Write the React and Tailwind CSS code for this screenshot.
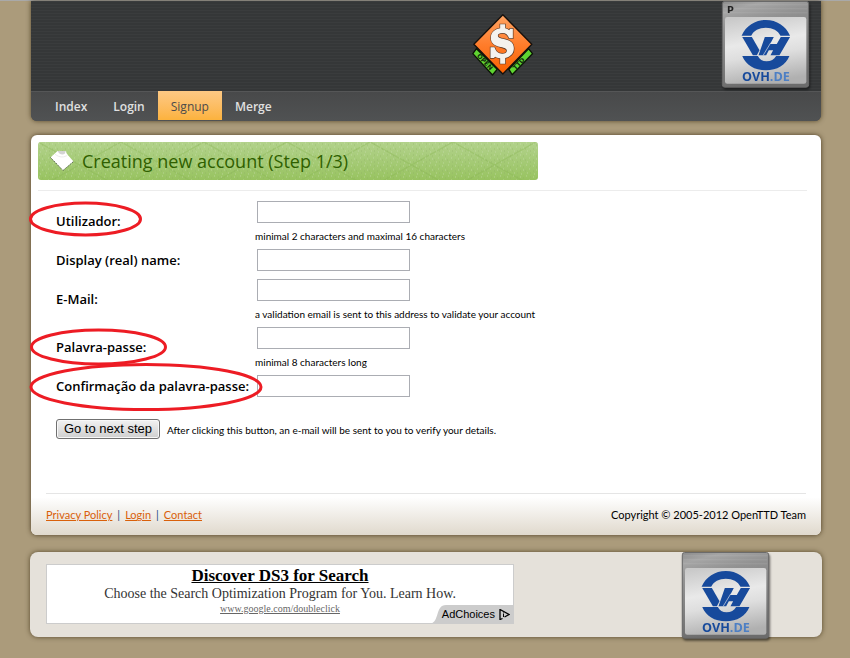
import React from "react";

function OvhBadge({ marker }) {
  return (
    <svg
      viewBox="65 3 262 261"
      className="h-[87px] w-[87px] shrink-0 overflow-visible drop-shadow-[1px_2px_1px_rgba(0,0,0,0.5)]"
      role="img"
      aria-label="OVH.DE"
    >
      <defs>
        <linearGradient id="badge-frame" x1="0" y1="0" x2="0.25" y2="1">
          <stop offset="0" stopColor="#8b8b8b" />
          <stop offset="0.12" stopColor="#a5a5a5" />
          <stop offset="0.3" stopColor="#929292" />
          <stop offset="1" stopColor="#6c6c6c" />
        </linearGradient>
        <linearGradient id="badge-face" x1="0.2" y1="0" x2="0.4" y2="1">
          <stop offset="0" stopColor="#c9c9c9" />
          <stop offset="0.4" stopColor="#e9e9e9" />
          <stop offset="0.6" stopColor="#dedede" />
          <stop offset="1" stopColor="#b0b0b0" />
        </linearGradient>
      </defs>
      <rect x="66" y="4" width="260" height="258" rx="7" fill="url(#badge-frame)" stroke="#6a6a6a" strokeWidth="3" />
      <path d="M70 14H322M70 26H322M70 38H322" stroke="#fff" strokeOpacity="0.1" strokeWidth="3" />
      <rect x="74" y="51" width="245" height="201" rx="7" fill="url(#badge-face)" />
      <g fill="#174a9c">
        <path d="M124 107C137 78 164 60 197 60C230 60 257 78 270 107H241C234 92 217 83 197 83C177 83 160 92 153 107Z" />
        <path d="M126 111H155L178 151L170 166H158Z" />
        <path d="M194 111H221L210 132H230L242 111H270L238 166H211L219 151H206L198 166H175Z" />
        <path d="M126 168H173C178 178 187 184 199 184C213 184 222 178 228 168H268C257 195 231 211 197 211C163 211 137 195 126 168Z" />
      </g>
      <path d="M189 166L212 128" stroke="#dfe3ea" strokeWidth="2" fill="none" />
      <text x="125" y="243" fontSize="38" fontWeight="700" fill="#174a9c" fontFamily="'Open Sans', sans-serif">
        OVH<tspan fill="#4d7fc4">.DE</tspan>
      </text>
      {marker && (
        <text x="80" y="38" fontSize="28" fontWeight="700" fill="#222" fontFamily="'DejaVu Sans', sans-serif">
          P
        </text>
      )}
    </svg>
  );
}

function OpenTtdLogo() {
  return (
    <svg viewBox="33 36 188 192" className="h-16 w-[63px]" role="img" aria-label="OpenTTD">
      <defs>
        <linearGradient id="sign" x1="0" y1="0" x2="0" y2="1">
          <stop offset="0" stopColor="#ffa463" />
          <stop offset="0.5" stopColor="#ff7d2c" />
          <stop offset="1" stopColor="#f86000" />
        </linearGradient>
      </defs>
      <g fill="#5fd432" stroke="#0b1405" strokeWidth="4" strokeLinejoin="round">
        <path d="M38 158L49 143L111 205L97 222Z" />
        <path d="M217 158L205 143L146 205L156 221Z" />
      </g>
      <path d="M128 41L215 130L128 219L41 130Z" fill="url(#sign)" stroke="#15100c" strokeWidth="4" strokeLinejoin="round" />
      <g fill="#f4f2ee" stroke="#5d3a26" strokeWidth="4" paintOrder="stroke">
        <path d="M120 70H135V82C140 83 144 85 147 88L150 83H158V112H147C143 101 137 96 127 96C118 96 113 99 113 104C113 110 119 111 131 114C150 118 161 125 161 142C161 158 150 168 135 171V188H120V172C113 171 108 169 105 167L101 171H91V139H103C107 152 115 158 126 158C135 158 140 155 140 149C140 143 135 141 121 138C103 134 92 127 92 110C92 95 104 84 120 82Z" />
      </g>
      <g fill="#10240a" fontFamily="'DejaVu Sans', sans-serif" fontWeight="700" fontSize="19">
        <text transform="translate(49 166) rotate(46)">OPEN</text>
        <text transform="translate(166 208) rotate(-46)">TTD</text>
      </g>
    </svg>
  );
}

function ShirtIcon() {
  return (
    <svg viewBox="0 0 24 22" className="h-[22px] w-6" aria-hidden="true">
      <path d="M7.500 1L15.500 1L17 4L23.500 11.500L13 20.500L.500 7.500Z" fill="#fff" />
      <path d="M.500 7.500L13 20.500L23.500 11.500" fill="none" stroke="#3f4f35" strokeWidth="0.900" strokeDasharray="1.500 1" />
      <path d="M7.500 1H15.500L15 3.500C13 5 9.500 5 7.500 1Z" fill="#d4d4d4" />
      <path d="M5 4C9 8 15 7.500 17.500 5" fill="none" stroke="#ececec" />
    </svg>
  );
}

const fields = [
  { id: "username", label: "Utilizador:", type: "text", hint: "minimal 2 characters and maximal 16 characters" },
  { id: "realname", label: "Display (real) name:", type: "text" },
  { id: "email", label: "E-Mail:", type: "email", hint: "a validation email is sent to this address to validate your account" },
  { id: "password", label: "Palavra-passe:", type: "password", hint: "minimal 8 characters long" },
  { id: "confirm", label: "Confirmação da palavra-passe:", type: "password" },
];

function Field({ id, label, type, hint }) {
  return (
    <div className="flex items-center">
      <label htmlFor={id} className="w-[199px] shrink-0 whitespace-nowrap text-[13px] leading-5 font-semibold">
        {label}
      </label>
      <div className="py-1">
        <input id={id} type={type} className="ml-0.5 block h-[22px] w-[153px] border border-[#abadb3] bg-white px-1 text-[13px] outline-none" />
        {hint && <p className="mt-1 h-3.5 font-['Trebuchet_MS',Lato,sans-serif] text-[10px] leading-[18px] whitespace-nowrap">{hint}</p>}
      </div>
    </div>
  );
}

const tabs = ["Index", "Login", "Signup", "Merge"];

export default function App() {
  return (
    <div className="min-h-screen border-t border-[#a9a9a9] bg-[#ab9b7b] pr-[29px] pb-5 pl-[31px] font-['Trebuchet_MS','Open_Sans',sans-serif] text-black">
      <header className="rounded-b-md bg-[#4b4c4d] shadow-[0_0_5px_rgba(50,35,10,0.7)]">
        <div className="flex h-[90px] bg-[repeating-linear-gradient(to_bottom,#3a3c3d_0px,#3a3c3d_1px,#303233_2px,#3a3c3d_3px)]">
          <div className="flex flex-1 justify-end pt-3">
            <OpenTtdLogo />
          </div>
          <div className="flex w-[287px] justify-end pr-3">
            <OvhBadge marker />
          </div>
        </div>
        <nav className="flex h-[30px] rounded-b-md border-t border-[#555657] bg-linear-to-b from-[#48494a] to-[#505253] pl-[11px] text-xs leading-[30px] font-semibold">
          {tabs.map((tab) => (
            <a
              key={tab}
              href={"#" + tab.toLowerCase()}
              className={
                tab === "Signup"
                  ? "-mt-px h-[29px] bg-linear-to-b from-[#fdc984] to-[#fcb23c] px-[13px] pt-px font-normal text-[#4b4b4b]"
                  : "px-[13px] text-[#e0e0e0]"
              }
            >
              {tab}
            </a>
          ))}
        </nav>
      </header>

      <main className="mt-3.5 rounded-md bg-white pt-[7px] shadow-[0_0_5px_rgba(50,35,10,0.8)]">
        <h1 className="relative ml-[7px] flex h-[38px] max-w-[500px] items-center overflow-hidden rounded-[3px] bg-linear-to-b from-[#b2d28b] to-[#98c360] pl-3 text-lg text-[#2f5f00]">
          <svg className="absolute inset-0 h-full w-full" aria-hidden="true">
            <defs>
              <pattern id="lattice" width="83" height="46" patternUnits="userSpaceOnUse">
                <path d="M0 0L83 46M83 0L0 46" stroke="#85b34f" strokeOpacity="0.35" strokeWidth="1.500" fill="none" />
              </pattern>
              <pattern id="specks" width="13" height="11" patternUnits="userSpaceOnUse">
                <path d="M1 2h1M7 1h1M10 5h1M4 6h1M8 9h1M2 10h1" stroke="#d3e3bf" strokeOpacity="0.500" />
                <path d="M4 3h1M11 2h1M6 7h1M1 7h1M11 9h1" stroke="#89a962" strokeOpacity="0.500" />
              </pattern>
            </defs>
            <rect width="100%" height="100%" fill="url(#lattice)" />
            <rect width="100%" height="100%" fill="url(#specks)" />
          </svg>
          <span className="relative flex items-center gap-2">
            <ShirtIcon />
            Creating new account (Step 1/3)
          </span>
        </h1>
        <hr className="mt-2.5 mr-3.5 ml-[7px] border-[#ececec]" />

        <form className="relative mt-1.5 pl-[25px]" onSubmit={(e) => e.preventDefault()}>
          {fields.map((field) => (
            <Field key={field.id} {...field} />
          ))}
          <svg className="pointer-events-none absolute top-0 left-0 h-[216px] w-60 overflow-visible" fill="none" stroke="#ed1c24" strokeWidth="3" aria-hidden="true">
            <ellipse cx="54.500" cy="22" rx="55" ry="16" />
            <ellipse cx="67.500" cy="150" rx="67" ry="17" />
            <ellipse cx="115" cy="190" rx="115" ry="22.500" />
          </svg>
          <div className="mt-[18px] flex items-center gap-[7px] pb-[54px]">
            <button
              type="submit"
              className="h-5 w-[104px] rounded-[3px] border border-[#707070] bg-linear-to-b from-[#f2f2f2] to-[#cfcfcf] font-['Liberation_Sans',sans-serif] text-[13px] leading-[18px] whitespace-nowrap shadow-[inset_0_0_0_1px_#f8f8f8]"
            >
              Go to next step
            </button>
            <span className="pt-0.5 font-['Trebuchet_MS',Lato,sans-serif] text-[10px] leading-[18px]">
              After clicking this button, an e-mail will be sent to you to verify your details.
            </span>
          </div>
        </form>

        <footer className="rounded-b-md bg-linear-to-b from-white from-10% to-[#e0d9cd] px-[15px] font-['Trebuchet_MS',Lato,sans-serif] text-[11px]">
          <div className="flex h-[42px] items-center justify-between border-t border-[#e5e5e5] pt-0.5">
            <div className="flex gap-[5px] text-[#1f4f7f]">
              <a href="#privacy" className="text-[#d9600a] underline">Privacy Policy</a>
              <span>|</span>
              <a href="#login" className="text-[#d9600a] underline">Login</a>
              <span>|</span>
              <a href="#contact" className="text-[#d9600a] underline">Contact</a>
            </div>
            <p>Copyright © 2005-2012 OpenTTD Team</p>
          </div>
        </footer>
      </main>

      <aside className="-mx-px mt-[17px] flex h-[85px] justify-between rounded-lg bg-[#e5e1da] pr-[53px] pl-4 shadow-[0_0_5px_rgba(50,35,10,0.7)]">
        <div className="relative mt-3 h-[60px] w-[468px] border border-[#ccc] bg-white text-center font-['Liberation_Serif',serif]">
          <a href="#ds3" className="block pt-0.5 text-[17px] leading-[18px] font-bold underline">Discover DS3 for Search</a>
          <p className="text-sm leading-[18px] text-[#333]">Choose the Search Optimization Program for You. Learn How.</p>
          <a href="#doubleclick" className="block text-[10px] leading-[11px] text-[#666] underline">www.google.com/doubleclick</a>
          <a
            href="#adchoices"
            className="absolute -right-px -bottom-px flex h-[19px] w-[84px] items-center justify-end gap-1 pr-1 font-['Liberation_Sans',sans-serif] text-[11px] leading-[19px]"
          >
            <svg viewBox="0 0 84 19" className="absolute inset-0 h-full w-full" aria-hidden="true">
              <path d="M0 19C10 17 5 0 16 0H84V19Z" fill="#ccc" />
            </svg>
            <span className="relative">AdChoices</span>
            <svg viewBox="0 0 11 11" className="relative h-[11px] w-[11px]" fill="none" stroke="#000" aria-hidden="true">
              <path d="M3.500 9.500L1 10.500V.500L10 5.500L5.500 8" strokeWidth="1.300" />
              <path d="M4.500 4.500V8M4.500 2.500V3.500" />
            </svg>
          </a>
        </div>
        <OvhBadge />
      </aside>
    </div>
  );
}
